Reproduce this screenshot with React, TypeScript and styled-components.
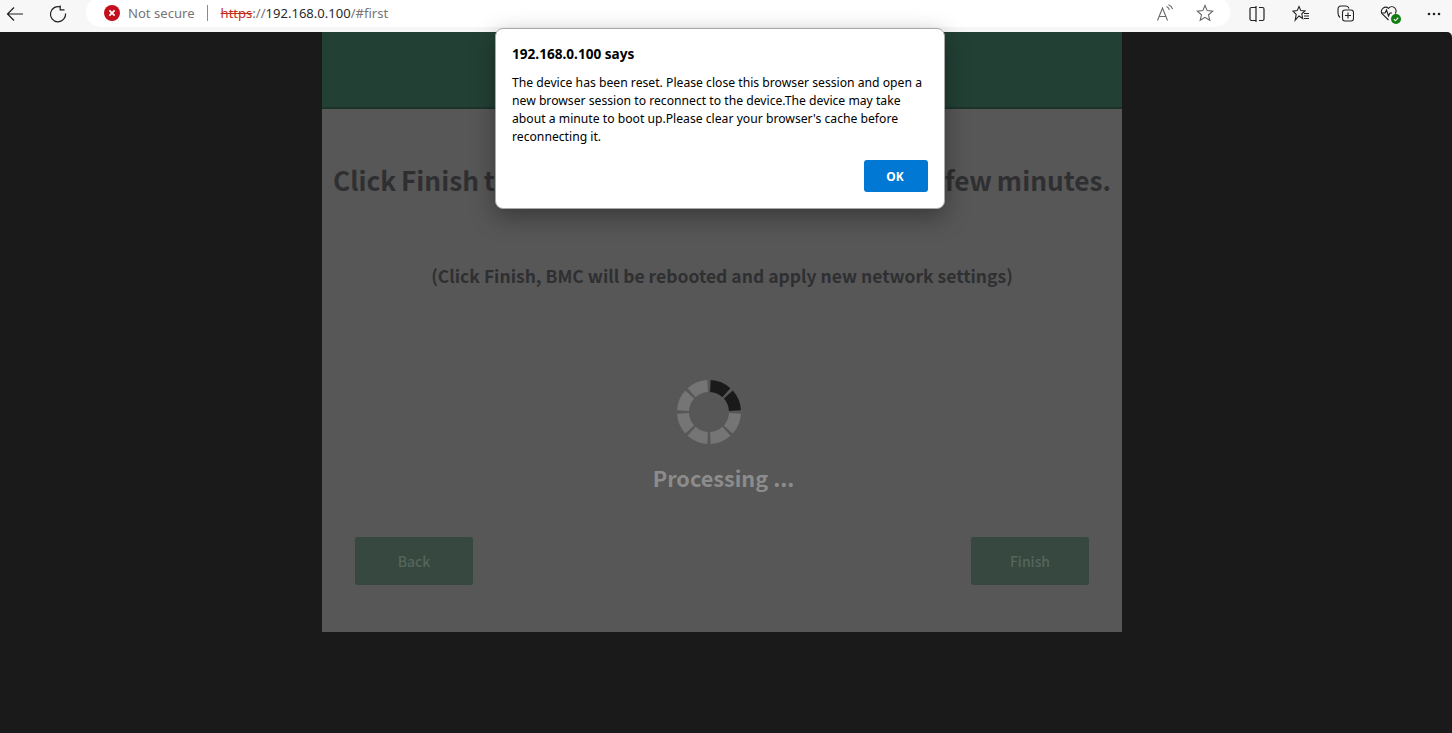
import styled, { createGlobalStyle } from 'styled-components';

const GlobalStyle = createGlobalStyle`
  html, body {
    margin: 0;
    padding: 0;
    height: 100%;
    overflow: hidden;
    background: #f7f7f7;
  }
  #root {
    height: 100%;
  }
`

const SPINNER_SEGMENTS = [0, 1, 2, 3, 4, 5, 6, 7]

const segmentPath = (index: number) => {
  const cx = 33
  const cy = 33
  const outer = 32
  const inner = 20
  const gap = 3
  const start = (index * 45 + gap) * Math.PI / 180
  const end = ((index + 1) * 45 - gap) * Math.PI / 180
  const pt = (r: number, a: number) => `${(cx + r * Math.sin(a)).toFixed(2)} ${(cy - r * Math.cos(a)).toFixed(2)}`
  return `M${pt(outer, start)} A${outer} ${outer} 0 0 1 ${pt(outer, end)} L${pt(inner, end)} A${inner} ${inner} 0 0 0 ${pt(inner, start)} Z`
}

export default function App() {
  return (
    <Screen>
      <GlobalStyle />
      <Toolbar>
        <NavButton $width={30}>
          <svg width="18" height="16" viewBox="0 0 18 16" fill="none" stroke="#1f1f1f" strokeWidth="1.2">
            <path d="M17 8H1.5M8 1.5L1.5 8L8 14.5" />
          </svg>
        </NavButton>
        <NavButton $width={56}>
          <svg width="18" height="18" viewBox="0 0 18 18" fill="none" stroke="#1f1f1f" strokeWidth="1.2">
            <path d="M11.5 2A7.6 7.6 0 1 0 16.6 8.5" />
            <path d="M11.2 0.5V4.8H15.5" />
          </svg>
        </NavButton>
        <AddressPill>
          <svg width="16" height="16" viewBox="0 0 16 16">
            <circle cx="8" cy="8" r="8" fill="#c40f1f" />
            <path d="M5.4 5.4L10.6 10.6M10.6 5.4L5.4 10.6" stroke="#fff" strokeWidth="1.8" />
          </svg>
          <SecurityLabel>Not secure</SecurityLabel>
          <Divider />
          <Url>
            <Scheme>https</Scheme>://<Host>192.168.0.100</Host>/#first
          </Url>
          <PillIcons>
            <svg width="18" height="18" viewBox="0 0 18 18" fill="none" stroke="#6a6a6a" strokeWidth="1.1">
              <path d="M1.5 16.5L6.5 4L11.5 16.5M3.2 12.5H9.8" />
              <path d="M10.5 2.5C12.2 3.2 13 4.2 13.4 5.8M12.5 0.8C15 1.8 16 3.2 16.6 5.2" />
            </svg>
            <svg width="18" height="18" viewBox="0 0 18 18" fill="none" stroke="#666" strokeWidth="1.1">
              <path d="M9 1.5L11.2 6.6L16.8 7.1L12.5 10.8L13.8 16.3L9 13.4L4.2 16.3L5.5 10.8L1.2 7.1L6.8 6.6Z" />
            </svg>
          </PillIcons>
        </AddressPill>
        <ActionIcons>
          <svg width="16" height="16" viewBox="0 0 16 16" fill="none" stroke="#222" strokeWidth="1.2">
            <path d="M7 1.5H2.5A1.5 1.5 0 0 0 1 3V13A1.5 1.5 0 0 0 2.5 14.5H7ZM7 0V16M10 1.5H13.5A1.5 1.5 0 0 1 15 3V13A1.5 1.5 0 0 1 13.5 14.5H10" />
          </svg>
          <svg width="18" height="17" viewBox="0 0 18 17" fill="none" stroke="#222" strokeWidth="1.1">
            <path d="M7 1.5L8.8 5.6L13 6L9.8 8.8L10.7 13.5L7 11L3.2 15.2L4.2 9.4L1 6.2L5.2 5.6Z" />
            <path d="M12 8.5H17M12 11H17M12 13.5H17" />
          </svg>
          <svg width="17" height="17" viewBox="0 0 17 17" fill="none" stroke="#222" strokeWidth="1.1">
            <path d="M3 12.5C1.8 11.5 1 10 1 8V4C1 2.2 2.2 1 4 1H9C10.5 1 11.5 2 12 3.5" />
            <rect x="5.5" y="5" width="11" height="11" rx="2.5" />
            <path d="M11 7.5V13.5M8 10.5H14" />
          </svg>
          <HealthIcon>
            <svg width="19" height="18" viewBox="0 0 19 18" fill="none" stroke="#222" strokeWidth="1.1">
              <path d="M8.5 15L2.3 9A4.2 4.2 0 0 1 8.5 3.4A4.2 4.2 0 0 1 15.2 8.6" />
              <path d="M1.5 8H5L6.5 5L8.5 11L10 8H12" />
            </svg>
            <HealthBadge width="10" height="10" viewBox="0 0 10 10">
              <circle cx="5" cy="5" r="5" fill="#107c10" />
              <path d="M2.8 5.2L4.4 6.8L7.3 3.6" fill="none" stroke="#fff" strokeWidth="1.1" />
            </HealthBadge>
          </HealthIcon>
          <svg width="16" height="16" viewBox="0 0 16 16" fill="#222">
            <circle cx="3" cy="8" r="1.3" />
            <circle cx="8" cy="8" r="1.3" />
            <circle cx="13" cy="8" r="1.3" />
          </svg>
        </ActionIcons>
      </Toolbar>

      <Page>
        <Card>
          <CardHeader />
          <CardBody>
            <Heading>Click Finish to save the settings. This may take a few minutes.</Heading>
            <SubHeading>(Click Finish, BMC will be rebooted and apply new network settings)</SubHeading>
            <Spinner>
              <svg width="66" height="66" viewBox="0 0 66 66">
                {SPINNER_SEGMENTS.map((i) => (
                  <path key={i} d={segmentPath(i)} fill={i < 2 ? '#1a1a1a' : '#757575'} />
                ))}
              </svg>
            </Spinner>
            <Processing>Processing ...</Processing>
            <ButtonRow>
              <WizardButton>Back</WizardButton>
              <WizardButton>Finish</WizardButton>
            </ButtonRow>
          </CardBody>
        </Card>
      </Page>

      <Dialog>
        <DialogTitle>192.168.0.100 says</DialogTitle>
        <DialogText>
          The device has been reset. Please close this browser session and open a new browser session to reconnect to the device.The device may take about a minute to boot up.Please clear your browser's cache before reconnecting it.
        </DialogText>
        <DialogActions>
          <OkButton>OK</OkButton>
        </DialogActions>
      </Dialog>
    </Screen>
  )
}

const Screen = styled.div`
  position: relative;
  display: flex;
  flex-direction: column;
  height: 100%;
  font-family: "Noto Sans", "Liberation Sans", sans-serif;
`

const Toolbar = styled.div`
  display: flex;
  align-items: flex-start;
  flex: 0 0 32px;
  height: 32px;
  background: #f7f7f7;
  overflow: hidden;
`

const NavButton = styled.div<{ $width: number }>`
  display: flex;
  align-items: center;
  justify-content: center;
  width: ${(p) => p.$width}px;
  height: 27px;
`

const AddressPill = styled.div`
  display: flex;
  align-items: center;
  box-sizing: border-box;
  width: 1144px;
  height: 30px;
  margin-top: -3px;
  padding: 2px 16px 0 18px;
  border-radius: 15px;
  background: #fff;
`

const SecurityLabel = styled.span`
  margin-left: 8px;
  font-size: 13.1px;
  color: #757575;
`

const Divider = styled.span`
  width: 1px;
  height: 16px;
  margin: 0 13px 0 12px;
  background: #8a8a8a;
`

const Url = styled.span`
  font-size: 13.05px;
  color: #757575;
`

const Scheme = styled.span`
  color: #c42b1c;
  text-decoration: line-through;
`

const Host = styled.span`
  color: #2b2b2b;
`

const PillIcons = styled.div`
  display: flex;
  align-items: center;
  gap: 22px;
  margin-left: auto;
`

const ActionIcons = styled.div`
  display: flex;
  align-items: center;
  justify-content: space-between;
  box-sizing: border-box;
  width: 222px;
  height: 27px;
  padding: 0 10px 0 19px;
`

const HealthIcon = styled.div`
  position: relative;
  display: flex;
`

const HealthBadge = styled.svg`
  position: absolute;
  right: -2px;
  bottom: -1px;
`

const Page = styled.div`
  flex: 1;
  display: flex;
  justify-content: center;
  align-items: flex-start;
  padding-right: 8px;
  background: #1a1a1a;
  border-top-right-radius: 5px;
`

const Card = styled.div`
  display: flex;
  flex-direction: column;
  width: 800px;
  height: 600px;
  background: #575757;
`

const CardHeader = styled.div`
  flex: 0 0 75px;
  background: #234035;
  border-bottom: 2px solid #1b342a;
`

const CardBody = styled.div`
  flex: 1;
  display: flex;
  flex-direction: column;
  align-items: center;
  font-family: "Noto Sans CJK SC", "Noto Sans", sans-serif;
  font-weight: 700;
`

const Heading = styled.h1`
  margin: 49px 0 0;
  font-size: 26.25px;
  line-height: 44px;
  font-weight: 700;
  word-spacing: -1.1px;
  white-space: nowrap;
  color: #2f2f32;
`

const SubHeading = styled.h2`
  margin: 59px 0 0;
  font-size: 17.5px;
  line-height: 30px;
  font-weight: 700;
  white-space: nowrap;
  color: #2f2f32;
`

const Spinner = styled.div`
  display: flex;
  margin-top: 88px;
  margin-left: -26px;
`

const Processing = styled.div`
  margin-top: 15px;
  margin-left: 3px;
  font-size: 21.7px;
  line-height: 36px;
  color: #8c8c8c;
`

const ButtonRow = styled.div`
  display: flex;
  justify-content: space-between;
  align-self: stretch;
  margin-top: 41px;
  padding: 0 33px;
`

const WizardButton = styled.div`
  display: flex;
  align-items: center;
  justify-content: center;
  width: 118px;
  height: 48px;
  border-radius: 2px;
  background: #374840;
  font-size: 14px;
  font-weight: 500;
  color: #55655c;
`

const Dialog = styled.div`
  position: absolute;
  top: 28px;
  left: 495px;
  box-sizing: border-box;
  width: 450px;
  height: 181px;
  padding: 16px 16px 0 16px;
  border: 1px solid #a8a8a8;
  border-radius: 8px;
  background: #fff;
  box-shadow: 0 8px 24px rgba(0, 0, 0, 0.35);
`

const DialogTitle = styled.div`
  font-size: 13.6px;
  line-height: 18px;
  font-weight: 700;
  color: #000;
`

const DialogText = styled.div`
  margin-top: 11px;
  font-size: 12.18px;
  line-height: 18px;
  color: #000;
`

const DialogActions = styled.div`
  display: flex;
  justify-content: flex-end;
  margin-top: 14px;
`

const OkButton = styled.div`
  display: flex;
  align-items: center;
  justify-content: center;
  width: 64px;
  height: 32px;
  padding-right: 2px;
  box-sizing: border-box;
  border-radius: 3px;
  background: #0078d4;
  font-size: 12px;
  font-weight: 700;
  color: #fff;
`
